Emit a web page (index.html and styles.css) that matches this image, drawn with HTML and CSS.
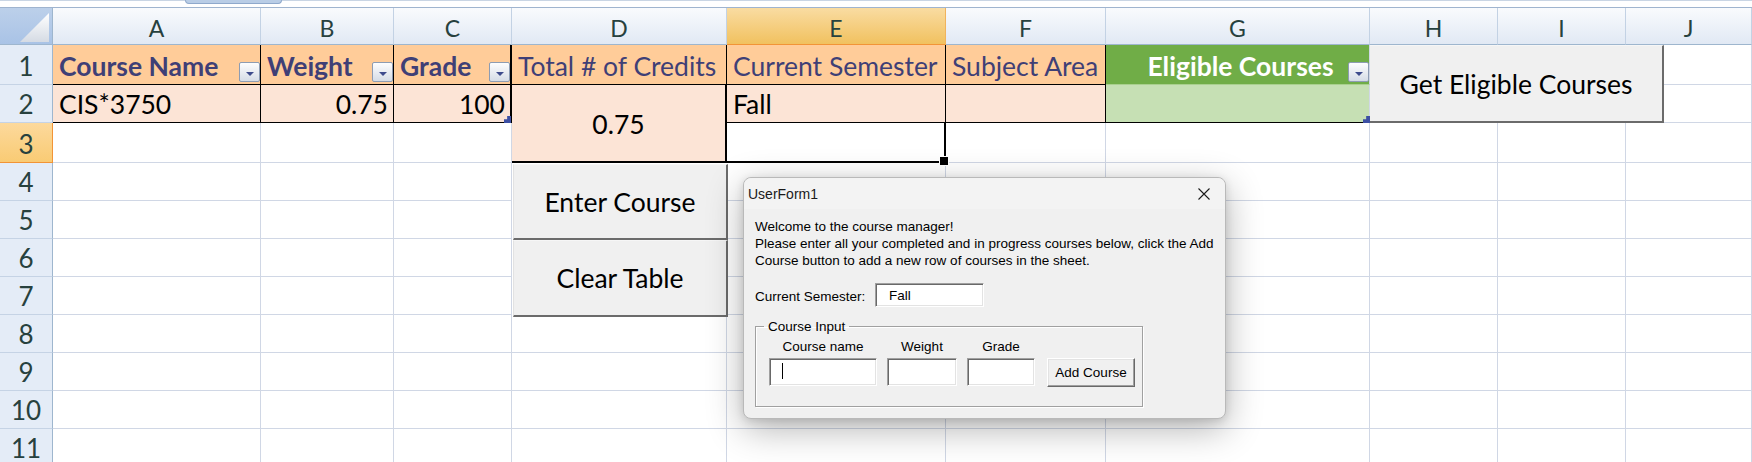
FILE: index.html
```html
<!DOCTYPE html>
<html lang="en">
<head>
<meta charset="utf-8">
<title>Course Manager</title>
<link rel="stylesheet" href="styles.css">
</head>
<body>
<div class="topbar"><span class="tab"></span></div>
<div class="sheet">
  <!-- column headers -->
  <div class="corner"><svg width="52" height="36" viewBox="0 0 52 36"><defs><linearGradient id="tg" x1="0" y1="0" x2="0" y2="1"><stop offset="0" stop-color="#ffffff"/><stop offset="1" stop-color="#d5dbe4"/></linearGradient></defs><polygon points="20,34 49,34 49,5" fill="url(#tg)"/></svg></div>
  <div class="ch">A</div><div class="ch">B</div><div class="ch">C</div><div class="ch">D</div>
  <div class="ch on">E</div><div class="ch">F</div><div class="ch">G</div><div class="ch">H</div>
  <div class="ch">I</div><div class="ch">J</div>

  <!-- row 1 -->
  <div class="rh">1</div>
  <div class="c hd b kr kb"><span class="t">Course Name</span><span class="flt"></span></div>
  <div class="c hd b kr kb"><span class="t">Weight</span><span class="flt"></span></div>
  <div class="c hd b kr2 kb"><span class="t">Grade</span><span class="flt"></span></div>
  <div class="c hd kr kb"><span class="t">Total # of Credits</span></div>
  <div class="c hd kr kb"><span class="t">Current Semester</span></div>
  <div class="c hd kr kb"><span class="t">Subject Area</span></div>
  <div class="c gr b ctr"><span class="t">Eligible Courses</span><span class="flt"></span></div>
  <div class="c colj"></div>

  <!-- row 2 -->
  <div class="rh">2</div>
  <div class="c lt kr kb"><span class="t">CIS*3750</span></div>
  <div class="c lt kr kb right"><span class="t">0.75</span></div>
  <div class="c lt kr2 kb right rsz"><span class="t">100</span></div>
  <div class="c lt merged"><span class="t">0.75</span></div>
  <div class="c lt kr kb"><span class="t">Fall</span></div>
  <div class="c lt kr kb"></div>
  <div class="c lg kb rsz"></div>
  <div class="c colj"></div>

  <!-- row 3 -->
  <div class="rh on">3</div>
  <div class="c"></div><div class="c"></div><div class="c"></div>
  <div class="c sel"></div>
  <div class="c"></div><div class="c"></div><div class="c"></div><div class="c"></div><div class="c"></div>

  <!-- rows 4-7 (column D is covered by the buttons) -->
  <div class="rh">4</div><div class="c"></div><div class="c"></div><div class="c"></div><div class="c"></div><div class="c"></div><div class="c"></div><div class="c"></div><div class="c"></div><div class="c"></div>
  <div class="rh">5</div><div class="c"></div><div class="c"></div><div class="c"></div><div class="c"></div><div class="c"></div><div class="c"></div><div class="c"></div><div class="c"></div><div class="c"></div>
  <div class="rh">6</div><div class="c"></div><div class="c"></div><div class="c"></div><div class="c"></div><div class="c"></div><div class="c"></div><div class="c"></div><div class="c"></div><div class="c"></div>
  <div class="rh">7</div><div class="c"></div><div class="c"></div><div class="c"></div><div class="c"></div><div class="c"></div><div class="c"></div><div class="c"></div><div class="c"></div><div class="c"></div>

  <!-- rows 8-11 -->
  <div class="rh">8</div><div class="c"></div><div class="c"></div><div class="c"></div><div class="c"></div><div class="c"></div><div class="c"></div><div class="c"></div><div class="c"></div><div class="c"></div><div class="c"></div>
  <div class="rh">9</div><div class="c"></div><div class="c"></div><div class="c"></div><div class="c"></div><div class="c"></div><div class="c"></div><div class="c"></div><div class="c"></div><div class="c"></div><div class="c"></div>
  <div class="rh">10</div><div class="c"></div><div class="c"></div><div class="c"></div><div class="c"></div><div class="c"></div><div class="c"></div><div class="c"></div><div class="c"></div><div class="c"></div><div class="c"></div>
  <div class="rh">11</div><div class="c"></div><div class="c"></div><div class="c"></div><div class="c"></div><div class="c"></div><div class="c"></div><div class="c"></div><div class="c"></div><div class="c"></div><div class="c"></div>

  <!-- sheet buttons (shapes over the cells) -->
  <div class="xbtn enter">Enter Course</div>
  <div class="xbtn clear">Clear Table</div>
  <div class="xbtn elig">Get Eligible Courses</div>
</div>

<div class="dlg">
  <div class="dlg-title">
    <span>UserForm1</span>
    <svg class="x" width="12" height="12" viewBox="0 0 12 12"><path d="M0.5 0.5 L11.5 11.5 M11.5 0.5 L0.5 11.5" stroke="#1b1b1b" stroke-width="1.1" fill="none"/></svg>
  </div>
  <div class="dlg-body">
    <p class="msg">Welcome to the course manager!<br>Please enter all your completed and in progress courses below, click the Add<br>Course button to add a new row of courses in the sheet.</p>
    <div class="sem">
      <span class="sem-lbl">Current Semester:</span>
      <span class="tb sem-box">Fall</span>
    </div>
    <fieldset class="frame">
      <legend>Course Input</legend>
      <div class="inputs">
        <span class="lbl">Course name</span>
        <span class="lbl">Weight</span>
        <span class="lbl">Grade</span>
        <span></span>
        <span class="tb"><span class="caret"></span></span>
        <span class="tb"></span>
        <span class="tb"></span>
        <span class="wbtn">Add Course</span>
      </div>
    </fieldset>
  </div>
</div>
</body>
</html>
```
FILE: styles.css
```css
* { box-sizing: border-box; }

body {
  margin: 0;
  width: 1752px;
  height: 462px;
  overflow: hidden;
  background: #ffffff;
  font-family: Lato, "Liberation Sans", sans-serif;
  position: relative;
}

.topbar {
  height: 8px;
  display: flex;
  padding-left: 185px;
  background: #ffffff;
  border-top: 1px solid #c9d5e4;
  border-bottom: 1px solid #9fb4cf;
}
.tab {
  width: 97px;
  height: 4px;
  margin-top: -1px;
  background: #b9cde6;
  border: 1px solid #8fa9cc;
  border-top: none;
  border-radius: 0 0 7px 7px;
}

.sheet {
  display: grid;
  grid-template-columns: 53px 208px 133px 118px 215px 219px 160px 264px 128px 128px 126px;
  grid-template-rows: 37px 40px 38px 40px repeat(8, 38px);
}

.corner {
  background: linear-gradient(#bcd0ea, #a9c3e6);
  border-right: 1px solid #9eb6ce;
  border-bottom: 1px solid #9eb6ce;
}
.corner svg { display: block; }

.ch {
  background: linear-gradient(#f9fbfd, #e1e9f4);
  border-right: 1px solid #c3d2e4;
  border-bottom: 1px solid #9eb6ce;
  display: flex;
  align-items: center;
  justify-content: center;
  padding-top: 3px;
  font-size: 23px;
  color: #27413e;
}
.ch.on {
  background: linear-gradient(#f9dca2, #f1c15f);
  border-right-color: #f0b35d;
  border-bottom-color: #f29436;
}

.rh {
  background: #e4ecf7;
  border-right: 1px solid #9eb6ce;
  border-bottom: 1px solid #c5d3e5;
  display: flex;
  align-items: flex-end;
  justify-content: center;
  padding-bottom: 3px;
  font-size: 26px;
  line-height: 30px;
  color: #27413e;
}
.rh.on {
  background: linear-gradient(#fcd99c, #f9cb74);
  border-right-color: #f29436;
  border-bottom-color: #f29436;
}

.c {
  border-right: 1px solid #d0d7e5;
  border-bottom: 1px solid #d0d7e5;
  display: flex;
  align-items: flex-end;
  padding: 0 5px 3px 6px;
  font-size: 26.5px;
  line-height: 30px;
  color: #000;
  white-space: nowrap;
  position: relative;
}
.c .t { flex: 1; }
.c.right .t { text-align: right; }
.c.ctr { padding-left: 27px; padding-right: 0; }
.c.ctr .t { text-align: center; }
.colj { grid-column: 11; }

.hd { background: #ffcc99; color: #3f3f76; }
.lt { background: #fce4d6; }
.gr { background: #70ad47; color: #ffffff; border-bottom-color: #a9d08e; }
.lg { background: #c6e0b4; }
.b { font-weight: bold; }

.kr { border-right-color: #000; }
.kb { border-bottom-color: #000; }
.kr2 { border-right: 2px solid #000; }

.c.hd, .c.gr { padding-right: 0; }

.flt {
  flex: none;
  width: 21px;
  height: 20px;
  margin-bottom: -1px;
  border: 1px solid #8d9cb3;
  border-radius: 2px;
  background: linear-gradient(#fdfdfe, #d5dce6);
  display: flex;
  align-items: center;
  justify-content: center;
  padding-top: 3px;
}
.flt::before {
  content: "";
  border-left: 4px solid transparent;
  border-right: 4px solid transparent;
  border-top: 4px solid #3d4b8c;
}

.merged {
  grid-row: span 2;
  border-right: 2px solid #000;
  border-bottom: 2px solid #000;
  align-items: center;
  justify-content: center;
  padding: 1px 0 0 0;
}
.merged .t { flex: none; }

.rsz::after {
  content: "";
  position: absolute;
  right: -1px;
  bottom: -1px;
  width: 7px;
  height: 7px;
  background: #3c4fa3;
  clip-path: polygon(100% 0, 100% 100%, 0 100%, 0 45%, 45% 45%, 45% 0);
  z-index: 2;
}

.sel {
  border-right: 2px solid #000;
  border-bottom: 2px solid #000;
}
.sel::after {
  content: "";
  position: absolute;
  right: -5px;
  bottom: -5px;
  width: 8px;
  height: 8px;
  background: #000;
  border: 1px solid #fff;
  z-index: 3;
}

.xbtn {
  background: #f0f0f0;
  border-left: 1px solid #e2e2e2;
  border-top: 1px solid #f6f6f6;
  border-right: 2px solid #6b6b6b;
  border-bottom: 2px solid #6b6b6b;
  display: flex;
  align-items: center;
  justify-content: center;
  font-size: 26.5px;
  color: #000;
  white-space: nowrap;
  z-index: 4;
}
.enter {
  grid-column: 5;
  grid-row: 5 / 7;
  margin: 1px -1px -1px 1px;
}
.clear {
  grid-column: 5;
  grid-row: 7 / 9;
  margin: 1px -1px -2px 1px;
}
.elig {
  grid-column: 9 / 11;
  grid-row: 2 / 4;
  justify-self: start;
  width: 294px;
  border-left: none;
}

/* ---------- UserForm dialog ---------- */
.dlg {
  position: absolute;
  left: 743px;
  top: 177px;
  width: 483px;
  height: 242px;
  background: #f0f0f0;
  border: 1px solid #b9b9b9;
  border-radius: 8px;
  box-shadow: 0 10px 36px rgba(0, 0, 0, 0.30), 0 2px 8px rgba(0, 0, 0, 0.12);
  font-family: "Liberation Sans", Arial, sans-serif;
  font-size: 13.5px;
  color: #000;
  z-index: 10;
}
.dlg-title {
  height: 31px;
  display: flex;
  align-items: center;
  justify-content: space-between;
  padding: 0 15px 0 4px;
  background: #f3f3f3;
  border-radius: 8px 8px 0 0;
  font-size: 14px;
  color: #1a1a1a;
}
.dlg-title .x { display: block; }

.dlg-body {
  padding: 9px 0 0 11px;
}
.msg {
  margin: 0;
  line-height: 17px;
  white-space: nowrap;
}
.sem {
  display: flex;
  align-items: center;
  margin-top: 14px;
}
.sem-lbl { width: 120px; padding-top: 3px; }
.tb {
  display: block;
  background: #ffffff;
  border: 1px solid;
  border-color: #a0a0a0 #ffffff #ffffff #a0a0a0;
  box-shadow: inset 1px 1px 0 #696969, inset -1px -1px 0 #e3e3e3;
}
.sem-box {
  width: 109px;
  height: 24px;
  padding: 4px 0 0 13px;
  line-height: 16px;
}

.frame {
  margin: 11px 0 0 0;
  padding: 0;
  width: 388px;
  height: 89px;
  border: 1px solid #a0a0a0;
  box-shadow: 1px 1px 0 #ffffff, inset 1px 1px 0 #ffffff;
}
.frame legend {
  margin-left: 8px;
  padding: 0 4px;
  line-height: 17px;
}
.inputs {
  display: grid;
  grid-template-columns: 108px 70px 68px 90px;
  grid-template-rows: 20px 29px;
  column-gap: 10px;
  margin: 3px 0 0 13px;
}
.lbl {
  text-align: center;
  line-height: 17px;
}
.inputs .tb { height: 28px; }
.caret {
  display: block;
  width: 1px;
  height: 16px;
  margin: 4px 0 0 12px;
  background: #000;
}
.wbtn {
  display: flex;
  align-items: center;
  justify-content: center;
  background: #f0f0f0;
  border: 1px solid;
  border-color: #ffffff #696969 #696969 #ffffff;
  box-shadow: inset -1px -1px 0 #a0a0a0, inset 1px 1px 0 #e3e3e3;
  height: 29px;
  margin-left: 2px;
}
```
